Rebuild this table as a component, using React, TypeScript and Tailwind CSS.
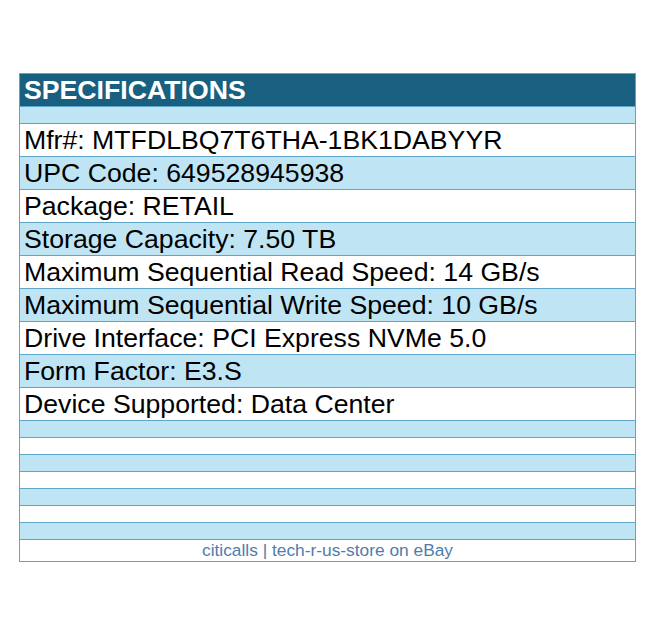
const specs = [
  'Mfr#: MTFDLBQ7T6THA-1BK1DABYYR',
  'UPC Code: 649528945938',
  'Package: RETAIL',
  'Storage Capacity: 7.50 TB',
  'Maximum Sequential Read Speed: 14 GB/s',
  'Maximum Sequential Write Speed: 10 GB/s',
  'Drive Interface: PCI Express NVMe 5.0',
  'Form Factor: E3.S',
  'Device Supported: Data Center',
];

export default function App() {
  return (
    <div className="min-h-screen bg-white pt-[73px] pl-[19px] font-['Liberation_Sans',Arial,sans-serif]">
      <div className="w-[617px] border border-[#5fa5c9]">
        <div className="flex h-[32px] items-center bg-[#195f80] px-[4px] text-[26.67px] font-bold leading-none text-white">
          SPECIFICATIONS
        </div>
        <div className="h-[17px] border-t border-[#5fa5c9] bg-[#bfe5f5]" />
        {specs.map((s, i) => (
          <div
            key={s}
            className={`flex h-[33px] items-center border-t border-[#5fa5c9] px-[4px] text-[26.67px] leading-none text-black ${
              i % 2 === 0 ? 'bg-white' : 'bg-[#bfe5f5]'
            }`}
          >
            {s}
          </div>
        ))}
        {[0, 1, 2, 3, 4, 5, 6].map((i) => (
          <div
            key={i}
            className={`h-[17px] border-t border-[#5fa5c9] ${i % 2 === 0 ? 'bg-[#bfe5f5]' : 'bg-white'}`}
          />
        ))}
        <div className="flex h-[22px] items-center justify-center border-t border-[#5fa5c9] bg-white text-[17.33px] leading-none text-[#4f7cab]">
          citicalls | tech-r-us-store on eBay
        </div>
      </div>
    </div>
  );
}
